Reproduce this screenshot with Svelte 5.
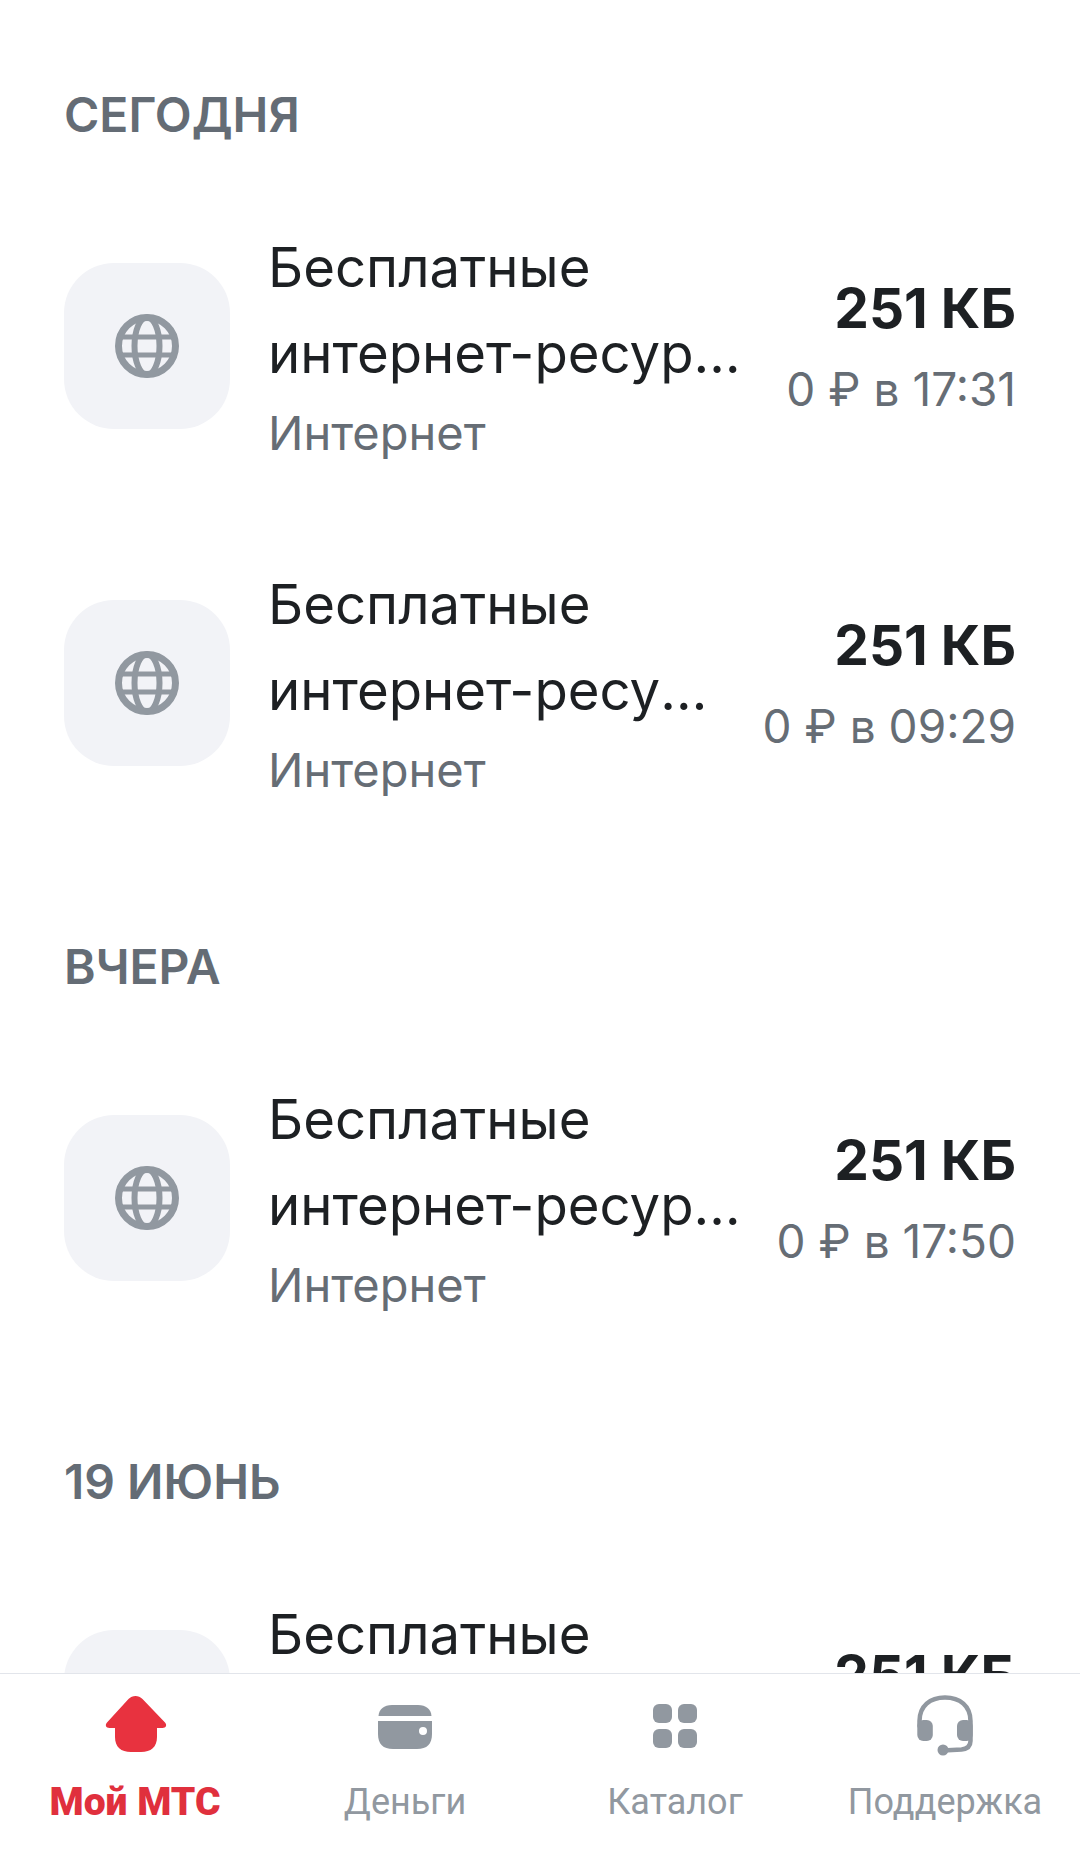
<script>
  const sections = [
    { title: 'СЕГОДНЯ', rows: [{ time: '0 ₽ в 17:31' }, { time: '0 ₽ в 09:29' }] },
    { title: 'ВЧЕРА', rows: [{ time: '0 ₽ в 17:50' }] },
    { title: '19 ИЮНЬ', rows: [{ time: '0 ₽ в 12:04' }] }
  ];
</script>

<div class="page">
  <main class="list">
    {#each sections as s}
      <section class="section">
        <h2 class="head">{s.title}</h2>
        {#each s.rows as r}
          <div class="row">
            <div class="tile">
              <svg class="globe" viewBox="0 0 64 64" aria-hidden="true">
                <circle cx="32" cy="32" r="28.500" fill="none" stroke="#9198a0" stroke-width="7"/>
                <ellipse cx="32" cy="32" rx="12.500" ry="28.800" fill="none" stroke="#9198a0" stroke-width="6"/>
                <path d="M5 23H59M5 41H59" fill="none" stroke="#9198a0" stroke-width="5.200"/>
              </svg>
            </div>
            <div class="text">
              <div class="title">Бесплатные</div>
              <div class="title">интернет-ресурсы</div>
              <div class="sub">Интернет</div>
            </div>
            <div class="right">
              <div class="amount">251 КБ</div>
              <div class="time">{r.time}</div>
            </div>
          </div>
        {/each}
      </section>
    {/each}
  </main>

  <nav class="nav">
    <div class="tab active">
      <svg class="ico" viewBox="0 0 62 62" aria-hidden="true">
        <path fill="#e8323f" d="M24.500 5c4-4 10-4 14 0L61 28.500c2.300 2.500 1 5.500-2.500 5.500H53v9c0 10-6 15-16 15H27c-10 0-16-5-16-15v-9H5.500C2 34 .700 31 3 28.500z"/>
      </svg>
      <span>Мой МТС</span>
    </div>
    <div class="tab">
      <svg class="ico" viewBox="0 0 62 62" aria-hidden="true">
        <path fill="#9198a0" d="M4.500 22C5 15 10 11 18 11h26c8 0 13 4 13.500 11z"/>
        <path fill="#9198a0" fill-rule="evenodd" d="M4 27h54v13c0 10-5 15-15 15H19C9 55 4 50 4 40zM45 37a4 4 0 1 0 8 0a4 4 0 1 0-8 0z"/>
      </svg>
      <span>Деньги</span>
    </div>
    <div class="tab">
      <svg class="ico" viewBox="0 0 62 62" aria-hidden="true">
        <rect x="9" y="10" width="19" height="19" rx="6" fill="#9198a0"/>
        <rect x="34" y="10" width="19" height="19" rx="6" fill="#9198a0"/>
        <rect x="9" y="35" width="19" height="19" rx="6" fill="#9198a0"/>
        <rect x="34" y="35" width="19" height="19" rx="6" fill="#9198a0"/>
      </svg>
      <span>Каталог</span>
    </div>
    <div class="tab">
      <svg class="ico" viewBox="0 0 62 62" aria-hidden="true">
        <path fill="none" stroke="#9198a0" stroke-width="4.500" stroke-linecap="round" d="M5.500 32V27C5.500 12 16 3.500 31 3.500S56.500 12 56.500 27v20c0 6-4 8-9 8.500L29 56.500"/>
        <rect x="3.300" y="26" width="15.500" height="21" rx="6" fill="#9198a0"/>
        <rect x="43" y="26" width="15.700" height="21" rx="6" fill="#9198a0"/>
        <circle cx="29" cy="56" r="5.500" fill="#9198a0"/>
      </svg>
      <span>Поддержка</span>
    </div>
  </nav>
</div>

<style>
  :global(body) { margin: 0; background: #fff; }
  .page {
    display: flex;
    flex-direction: column;
    width: 1080px;
    height: 1852px;
    overflow: hidden;
    font-family: Inter, "Liberation Sans", sans-serif;
    background: #fff;
  }
  .list {
    flex: 1;
    min-height: 0;
    overflow: hidden;
    padding: 85px 64px 0;
  }
  .section { margin-bottom: 171px; }
  .head {
    margin: 0 0 118px;
    font-size: 48px;
    line-height: 60px;
    font-weight: 600;
    color: #646c75;
  }
  .row {
    display: flex;
    align-items: center;
    height: 166px;
    margin-bottom: 171px;
  }
  .section .row:last-child { margin-bottom: 0; }
  .tile {
    flex: none;
    width: 166px;
    height: 166px;
    margin-right: 38px;
    border-radius: 50px;
    background: #f2f3f7;
    display: flex;
    align-items: center;
    justify-content: center;
  }
  .globe { width: 64px; height: 64px; }
  .text { flex: 1; min-width: 0; }
  .title {
    font-size: 54.500px;
    line-height: 86px;
    color: #1d2023;
    white-space: nowrap;
    overflow: hidden;
    text-overflow: ellipsis;
  }
  .sub {
    margin-top: 2px;
    font-size: 47px;
    line-height: 70px;
    color: #666d75;
  }
  .right { flex: none; text-align: right; padding-top: 4px; margin-left: 32px; }
  .amount {
    margin-bottom: 1px;
    font-size: 55px;
    line-height: 80px;
    font-weight: 700;
    color: #1d2023;
  }
  .time {
    font-size: 46px;
    line-height: 80px;
    color: #666d75;
  }
  .nav {
    flex: none;
    height: 178px;
    display: grid;
    grid-template-columns: repeat(4, 1fr);
    background: #fff;
    border-top: 1px solid #e2e5eb;
  }
  .tab {
    display: flex;
    flex-direction: column;
    align-items: center;
    padding-top: 20px;
    font-size: 36px;
    color: #9198a0;
    font-family: Roboto, sans-serif;
  }
  .tab span { margin-top: 25px; line-height: 42px; white-space: nowrap; }
  .ico { width: 62px; height: 62px; overflow: visible; }
  .active { color: #e0303d; font-weight: 900; font-size: 39px; }
</style>
